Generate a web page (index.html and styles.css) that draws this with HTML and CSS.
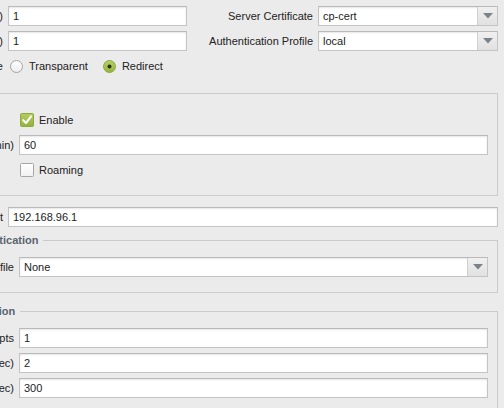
FILE: index.html
```html
<!DOCTYPE html>
<html>
<head>
<meta charset="utf-8">
<title>Captive Portal Settings</title>
<link rel="stylesheet" href="styles.css">
</head>
<body>
<div class="page">
  <div class="top">
    <span class="lbl">Timer (min)</span>
    <div class="field">1</div>
    <span class="lbl">Server Certificate</span>
    <div class="combo"><span class="combo-value">cp-cert</span><span class="combo-btn"><svg width="10" height="6" viewBox="0 0 10 6"><polygon points="0,0 10,0 5,5.5" fill="#7b838a"/></svg></span></div>

    <span class="lbl">Idle Timer (min)</span>
    <div class="field">1</div>
    <span class="lbl">Authentication Profile</span>
    <div class="combo"><span class="combo-value">local</span><span class="combo-btn"><svg width="10" height="6" viewBox="0 0 10 6"><polygon points="0,0 10,0 5,5.5" fill="#7b838a"/></svg></span></div>

    <span class="lbl">Mode</span>
    <div class="radios">
      <span class="option">
        <svg class="radio" width="13" height="13" viewBox="0 0 13 13"><defs><linearGradient id="rw" x1="0" y1="0" x2="0" y2="1"><stop offset="0" stop-color="#ffffff"/><stop offset="1" stop-color="#ececec"/></linearGradient></defs><circle cx="6.5" cy="6.5" r="6" fill="url(#rw)" stroke="#a3a3a3"/></svg>
        Transparent
      </span>
      <span class="option">
        <svg class="radio" width="13" height="13" viewBox="0 0 13 13"><defs><linearGradient id="rg" x1="0" y1="0" x2="0" y2="1"><stop offset="0" stop-color="#b7cf62"/><stop offset="1" stop-color="#97b43f"/></linearGradient></defs><circle cx="6.5" cy="6.5" r="6" fill="url(#rg)" stroke="#8ea83f"/><circle cx="6.5" cy="6.5" r="2" fill="#27300f"/></svg>
        Redirect
      </span>
    </div>
  </div>

  <fieldset class="group g1">
    <legend>Session Cookie</legend>
    <div class="form">
      <span class="lbl"></span>
      <span class="check">
        <svg width="14" height="14" viewBox="0 0 14 14"><defs><linearGradient id="cg" x1="0" y1="0" x2="0" y2="1"><stop offset="0" stop-color="#b5cd60"/><stop offset="1" stop-color="#93b03c"/></linearGradient></defs><rect x="0.5" y="0.5" width="13" height="13" rx="1" fill="url(#cg)" stroke="#8fa93f"/><path d="M3.2 7.2 L6 10 L11 3.4" fill="none" stroke="#ffffff" stroke-width="2.1" stroke-linecap="round" stroke-linejoin="round"/></svg>
        Enable
      </span>
      <span class="lbl">Expiration (min)</span>
      <div class="field">60</div>
      <span class="lbl"></span>
      <span class="check">
        <svg width="14" height="14" viewBox="0 0 14 14"><defs><linearGradient id="cw" x1="0" y1="0" x2="0" y2="1"><stop offset="0" stop-color="#ffffff"/><stop offset="1" stop-color="#f1f1f1"/></linearGradient></defs><rect x="0.5" y="0.5" width="13" height="13" rx="1" fill="url(#cw)" stroke="#a6a6a6"/></svg>
        Roaming
      </span>
    </div>
  </fieldset>

  <div class="iprow">
    <span class="lbl">Redirect Host</span>
    <div class="field">192.168.96.1</div>
  </div>

  <fieldset class="group g2">
    <legend>Certificate Authentication</legend>
    <div class="form">
      <span class="lbl">Certificate Profile</span>
      <div class="combo"><span class="combo-value">None</span><span class="combo-btn"><svg width="10" height="6" viewBox="0 0 10 6"><polygon points="0,0 10,0 5,5.5" fill="#7b838a"/></svg></span></div>
    </div>
  </fieldset>

  <fieldset class="group g3">
    <legend>NTLM Authentication</legend>
    <div class="form">
      <span class="lbl">Attempts</span>
      <div class="field">1</div>
      <span class="lbl">Timeout (sec)</span>
      <div class="field">2</div>
      <span class="lbl">Reconnect Time (sec)</span>
      <div class="field">300</div>
    </div>
  </fieldset>
</div>
</body>
</html>
```

FILE: styles.css
```css
html, body {
  margin: 0;
  padding: 0;
  background: #ebebeb;
  overflow: hidden;
}

body {
  font-family: "Liberation Sans", Arial, sans-serif;
  font-size: 11px;
  color: #222;
}

.page {
  margin: 0 6px 0 -150px;
  padding-top: 6px;
}

.lbl {
  text-align: right;
  white-space: nowrap;
  line-height: 20px;
  height: 20px;
}

.top {
  display: grid;
  grid-template-columns: 153px 179px 1fr 180px;
  grid-auto-rows: 20px;
  column-gap: 5px;
  row-gap: 5px;
}

.field {
  box-sizing: border-box;
  height: 20px;
  line-height: 18px;
  padding: 0 4px;
  background: #fff;
  border: 1px solid #c4c4c4;
  border-top-color: #b9b9b9;
  box-shadow: inset 0 1px 2px rgba(0, 0, 0, 0.1);
  white-space: nowrap;
}

.combo {
  box-sizing: border-box;
  height: 20px;
  display: flex;
  background: #fff;
  border: 1px solid #c4c4c4;
  border-top-color: #b9b9b9;
  box-shadow: inset 0 1px 2px rgba(0, 0, 0, 0.1);
}

.combo-value {
  flex: 1;
  line-height: 18px;
  padding: 0 4px;
}

.combo-btn {
  width: 19px;
  border-left: 1px solid #cfcfcf;
  background: linear-gradient(#f0f0f0, #e1e1e1);
  display: flex;
  align-items: center;
  justify-content: center;
}

.radios {
  display: flex;
  align-items: center;
  height: 20px;
  padding-left: 2px;
}

.option {
  display: flex;
  align-items: center;
  gap: 6px;
  margin-right: 15px;
}

.radio {
  display: block;
}

.group {
  margin: 0;
  padding: 10px 9px 15px 9px;
  border: 1px solid #cbcbcb;
  min-width: 0;
}

.group legend {
  margin-left: 42px;
  padding: 0 5px 0 3px;
  line-height: 14px;
  font-weight: bold;
  color: #5a646e;
  white-space: nowrap;
}

.g1 {
  margin-top: 10px;
}

.g2 {
  margin-top: 6px;
}

.g3 {
  margin-top: 11px;
}

.form {
  display: grid;
  grid-template-columns: 154px 1fr;
  grid-auto-rows: 20px;
  column-gap: 5px;
  row-gap: 5px;
}

.check {
  display: flex;
  align-items: center;
  gap: 5px;
  padding-left: 1px;
}

.check svg {
  display: block;
}

.iprow {
  display: grid;
  grid-template-columns: 153px 1fr;
  column-gap: 5px;
  margin-top: 11px;
}
```
